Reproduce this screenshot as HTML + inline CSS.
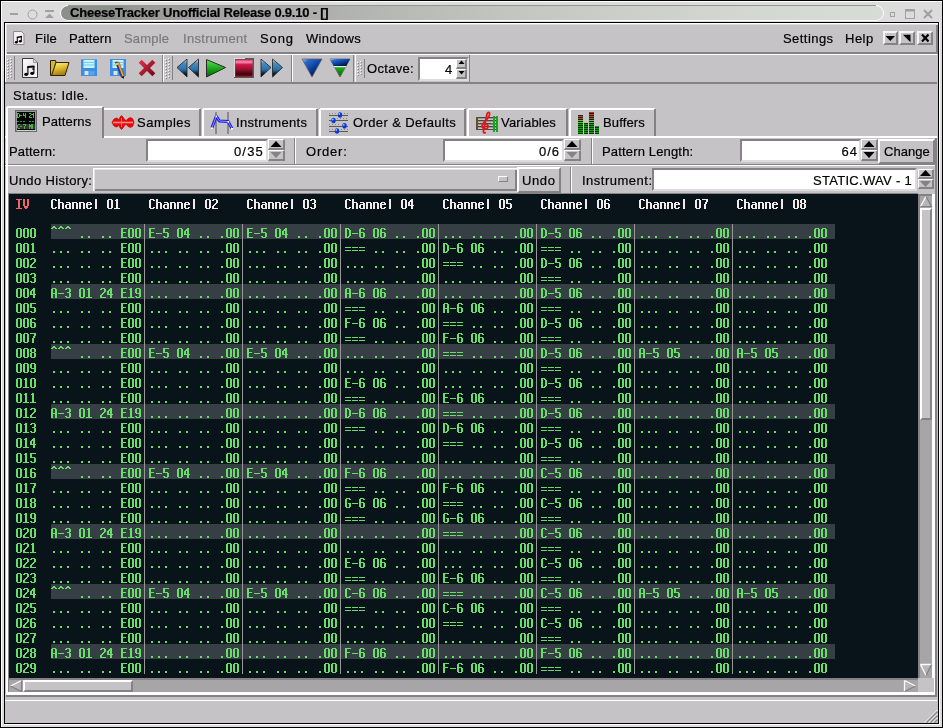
<!DOCTYPE html><html><head><meta charset="utf-8"><style>*{margin:0;padding:0}
html,body{width:943px;height:728px;overflow:hidden;background:#c6c3c6}
body{position:relative;font-family:"Liberation Sans",sans-serif;font-size:13px}
div{position:absolute}
.t{position:absolute;white-space:pre;line-height:15px;color:#000;font-size:13px;will-change:transform;-webkit-text-stroke:0.2px currentColor}
</style></head><body><div style="left:0px;top:0px;width:943px;height:728px;background:#000"></div>
<div style="left:1px;top:1px;width:941px;height:726px;background:#dcdcdc"></div>
<div style="left:1px;top:1px;width:941px;height:1px;background:#fff"></div>
<div style="left:1px;top:1px;width:1px;height:726px;background:#fff"></div>
<svg style="position:absolute;left:58px;top:4px" width="828" height="18"><defs><linearGradient id="tp" x1="0" x2="1" y1="0" y2="0"><stop offset="0" stop-color="#8a9089"/><stop offset="0.07" stop-color="#8c918b"/><stop offset="0.1" stop-color="#9a9b99"/><stop offset="0.25" stop-color="#a9a8a9"/><stop offset="0.4" stop-color="#b5b8b3"/><stop offset="0.55" stop-color="#c3c6c0"/><stop offset="0.7" stop-color="#cdd0ca"/><stop offset="0.85" stop-color="#d4d8d2"/><stop offset="1" stop-color="#d8dcd6"/></linearGradient></defs><path d="M10 1.5 H818 A7.5 7.5 0 0 1 818 16.5 H10 A7.5 7.5 0 0 1 10 1.5 Z" fill="url(#tp)" stroke="#fff" stroke-width="1"/><path d="M10 1.5 H818" stroke="#959595" stroke-width="1"/></svg>
<span class="t" style="left:70px;top:4px;font-weight:bold;font-size:13px;line-height:17px;letter-spacing:-0.22px">CheeseTracker Unofficial Release 0.9.10 - []</span>
<div style="left:10px;top:13px;width:8px;height:2px;background:#a0a0a0"></div>
<svg style="position:absolute;left:27px;top:9px" width="11" height="11"><circle cx="5.5" cy="5.5" r="4.5" fill="none" stroke="#a0a0a0" stroke-width="1"/></svg>
<svg style="position:absolute;left:44px;top:9px" width="11" height="11"><rect x="1" y="1" width="9" height="2" fill="#a0a0a0"/><path d="M1 9 L5.5 4.5 L10 9 Z" fill="#a0a0a0"/></svg>
<svg style="position:absolute;left:886px;top:9px" width="50" height="11"><rect x="4.5" y="3.5" width="4" height="4" fill="none" stroke="#a0a0a0"/><rect x="19.5" y="0.5" width="9" height="9" fill="none" stroke="#a0a0a0"/><rect x="19.5" y="0.5" width="9" height="2" fill="#a0a0a0"/><path d="M38 1 L46 9 M46 1 L38 9" stroke="#a0a0a0" stroke-width="2"/></svg>
<div style="left:4px;top:22px;width:935px;height:702px;background:#000"></div>
<div style="left:939px;top:22px;width:1px;height:703px;background:#fff"></div>
<div style="left:4px;top:724px;width:936px;height:1px;background:#fff"></div>
<div style="left:5px;top:23px;width:933px;height:700px;background:#c6c3c6"></div>
<div style="left:5px;top:23px;width:933px;height:31px;background:#c6c3c6;box-shadow:inset 1px 1px 0 #fff, inset 2px 2px 0 #dedbde, inset -1px -1px 0 #848284, inset -2px -2px 0 #848284"></div>
<svg style="position:absolute;left:13px;top:31px" width="13" height="15"><path d="M0.5 0.5 H8.5 L11 3 V13.5 H0.5 Z" fill="#f4f0f4" stroke="#8a8a8a"/><path d="M4.3 11 V6 M8.3 10 V5" stroke="#000" stroke-width="1"/><path d="M3.8 5.8 L8.8 4.8 V6.3 L3.8 7.3 Z" fill="#000"/><ellipse cx="3.3" cy="11.2" rx="1.5" ry="1.2" fill="#000"/><ellipse cx="7.3" cy="10.2" rx="1.5" ry="1.2" fill="#000"/></svg>
<span class="t" style="left:35px;top:31px;letter-spacing:0.300px;color:#000">File</span>
<span class="t" style="left:69px;top:31px;letter-spacing:0.100px;color:#000">Pattern</span>
<span class="t" style="left:124px;top:31px;letter-spacing:0.200px;color:#7b797b">Sample</span>
<span class="t" style="left:183px;top:31px;letter-spacing:0.300px;color:#7b797b">Instrument</span>
<span class="t" style="left:260px;top:31px;letter-spacing:0.900px;color:#000">Song</span>
<span class="t" style="left:306px;top:31px;letter-spacing:0.330px;color:#000">Windows</span>
<span class="t" style="left:783px;top:31px;letter-spacing:0.450px;color:#000">Settings</span>
<span class="t" style="left:845px;top:31px;letter-spacing:0.500px;color:#000">Help</span>
<div style="left:883px;top:31px;width:15px;height:14px;background:#c6c3c6;border-top:2px solid #f4f4f4;border-left:2px solid #f4f4f4;border-right:2px solid #848284;border-bottom:2px solid #848284;box-sizing:border-box"></div>
<svg style="position:absolute;left:883px;top:31px" width="15" height="14" viewBox="0 0 15 14"><path d="M2.5 5 H12 L7.25 10 Z" fill="#000"/></svg>
<div style="left:899px;top:31px;width:16px;height:14px;background:#c6c3c6;border-top:2px solid #f4f4f4;border-left:2px solid #f4f4f4;border-right:2px solid #848284;border-bottom:2px solid #848284;box-sizing:border-box"></div>
<svg style="position:absolute;left:899px;top:31px" width="16" height="14" viewBox="0 0 16 14"><path d="M4 3.8 H11.5 V11.3 Z" fill="#000"/></svg>
<div style="left:917px;top:31px;width:16px;height:14px;background:#c6c3c6;border-top:2px solid #f4f4f4;border-left:2px solid #f4f4f4;border-right:2px solid #848284;border-bottom:2px solid #848284;box-sizing:border-box"></div>
<svg style="position:absolute;left:917px;top:31px" width="16" height="14" viewBox="0 0 16 14"><path d="M5 3.5 L11.5 10.5 M11.5 3.5 L5 10.5" stroke="#000" stroke-width="2.2"/></svg>
<div style="left:5px;top:54px;width:932px;height:1px;background:#fff"></div>
<div style="left:5px;top:82px;width:932px;height:2px;background:#848284"></div>
<div style="left:291px;top:55px;width:1px;height:27px;background:#848284"></div>
<div style="left:292px;top:55px;width:1px;height:27px;background:#fff"></div>
<div style="left:5px;top:55px;width:1px;height:27px;background:#fff"></div>
<div style="left:162px;top:55px;width:1px;height:27px;background:#848284"></div>
<div style="left:163px;top:55px;width:1px;height:27px;background:#fff"></div>
<div style="left:353px;top:55px;width:1px;height:27px;background:#848284"></div>
<div style="left:355px;top:55px;width:1px;height:27px;background:#fff"></div>
<div style="left:469px;top:55px;width:1px;height:27px;background:#848284"></div>
<div style="left:7px;top:59px;width:1px;height:1px;background:#fff"></div>
<div style="left:8px;top:60px;width:1px;height:1px;background:#848284"></div>
<div style="left:7px;top:62px;width:1px;height:1px;background:#fff"></div>
<div style="left:8px;top:63px;width:1px;height:1px;background:#848284"></div>
<div style="left:7px;top:65px;width:1px;height:1px;background:#fff"></div>
<div style="left:8px;top:66px;width:1px;height:1px;background:#848284"></div>
<div style="left:7px;top:68px;width:1px;height:1px;background:#fff"></div>
<div style="left:8px;top:69px;width:1px;height:1px;background:#848284"></div>
<div style="left:7px;top:71px;width:1px;height:1px;background:#fff"></div>
<div style="left:8px;top:72px;width:1px;height:1px;background:#848284"></div>
<div style="left:7px;top:74px;width:1px;height:1px;background:#fff"></div>
<div style="left:8px;top:75px;width:1px;height:1px;background:#848284"></div>
<div style="left:7px;top:77px;width:1px;height:1px;background:#fff"></div>
<div style="left:8px;top:78px;width:1px;height:1px;background:#848284"></div>
<div style="left:10px;top:58px;width:1px;height:1px;background:#fff"></div>
<div style="left:11px;top:59px;width:1px;height:1px;background:#848284"></div>
<div style="left:10px;top:61px;width:1px;height:1px;background:#fff"></div>
<div style="left:11px;top:62px;width:1px;height:1px;background:#848284"></div>
<div style="left:10px;top:64px;width:1px;height:1px;background:#fff"></div>
<div style="left:11px;top:65px;width:1px;height:1px;background:#848284"></div>
<div style="left:10px;top:67px;width:1px;height:1px;background:#fff"></div>
<div style="left:11px;top:68px;width:1px;height:1px;background:#848284"></div>
<div style="left:10px;top:70px;width:1px;height:1px;background:#fff"></div>
<div style="left:11px;top:71px;width:1px;height:1px;background:#848284"></div>
<div style="left:10px;top:73px;width:1px;height:1px;background:#fff"></div>
<div style="left:11px;top:74px;width:1px;height:1px;background:#848284"></div>
<div style="left:10px;top:76px;width:1px;height:1px;background:#fff"></div>
<div style="left:11px;top:77px;width:1px;height:1px;background:#848284"></div>
<div style="left:14px;top:56px;width:1px;height:24px;background:#848284"></div>
<div style="left:165px;top:59px;width:1px;height:1px;background:#fff"></div>
<div style="left:166px;top:60px;width:1px;height:1px;background:#848284"></div>
<div style="left:165px;top:62px;width:1px;height:1px;background:#fff"></div>
<div style="left:166px;top:63px;width:1px;height:1px;background:#848284"></div>
<div style="left:165px;top:65px;width:1px;height:1px;background:#fff"></div>
<div style="left:166px;top:66px;width:1px;height:1px;background:#848284"></div>
<div style="left:165px;top:68px;width:1px;height:1px;background:#fff"></div>
<div style="left:166px;top:69px;width:1px;height:1px;background:#848284"></div>
<div style="left:165px;top:71px;width:1px;height:1px;background:#fff"></div>
<div style="left:166px;top:72px;width:1px;height:1px;background:#848284"></div>
<div style="left:165px;top:74px;width:1px;height:1px;background:#fff"></div>
<div style="left:166px;top:75px;width:1px;height:1px;background:#848284"></div>
<div style="left:165px;top:77px;width:1px;height:1px;background:#fff"></div>
<div style="left:166px;top:78px;width:1px;height:1px;background:#848284"></div>
<div style="left:168px;top:58px;width:1px;height:1px;background:#fff"></div>
<div style="left:169px;top:59px;width:1px;height:1px;background:#848284"></div>
<div style="left:168px;top:61px;width:1px;height:1px;background:#fff"></div>
<div style="left:169px;top:62px;width:1px;height:1px;background:#848284"></div>
<div style="left:168px;top:64px;width:1px;height:1px;background:#fff"></div>
<div style="left:169px;top:65px;width:1px;height:1px;background:#848284"></div>
<div style="left:168px;top:67px;width:1px;height:1px;background:#fff"></div>
<div style="left:169px;top:68px;width:1px;height:1px;background:#848284"></div>
<div style="left:168px;top:70px;width:1px;height:1px;background:#fff"></div>
<div style="left:169px;top:71px;width:1px;height:1px;background:#848284"></div>
<div style="left:168px;top:73px;width:1px;height:1px;background:#fff"></div>
<div style="left:169px;top:74px;width:1px;height:1px;background:#848284"></div>
<div style="left:168px;top:76px;width:1px;height:1px;background:#fff"></div>
<div style="left:169px;top:77px;width:1px;height:1px;background:#848284"></div>
<div style="left:172px;top:56px;width:1px;height:24px;background:#848284"></div>
<div style="left:357px;top:62px;width:1px;height:1px;background:#fff"></div>
<div style="left:358px;top:63px;width:1px;height:1px;background:#848284"></div>
<div style="left:357px;top:65px;width:1px;height:1px;background:#fff"></div>
<div style="left:358px;top:66px;width:1px;height:1px;background:#848284"></div>
<div style="left:357px;top:68px;width:1px;height:1px;background:#fff"></div>
<div style="left:358px;top:69px;width:1px;height:1px;background:#848284"></div>
<div style="left:357px;top:71px;width:1px;height:1px;background:#fff"></div>
<div style="left:358px;top:72px;width:1px;height:1px;background:#848284"></div>
<div style="left:357px;top:74px;width:1px;height:1px;background:#fff"></div>
<div style="left:358px;top:75px;width:1px;height:1px;background:#848284"></div>
<div style="left:360px;top:61px;width:1px;height:1px;background:#fff"></div>
<div style="left:361px;top:62px;width:1px;height:1px;background:#848284"></div>
<div style="left:360px;top:64px;width:1px;height:1px;background:#fff"></div>
<div style="left:361px;top:65px;width:1px;height:1px;background:#848284"></div>
<div style="left:360px;top:67px;width:1px;height:1px;background:#fff"></div>
<div style="left:361px;top:68px;width:1px;height:1px;background:#848284"></div>
<div style="left:360px;top:70px;width:1px;height:1px;background:#fff"></div>
<div style="left:361px;top:71px;width:1px;height:1px;background:#848284"></div>
<div style="left:360px;top:73px;width:1px;height:1px;background:#fff"></div>
<div style="left:361px;top:74px;width:1px;height:1px;background:#848284"></div>
<div style="left:364px;top:59px;width:1px;height:19px;background:#848284"></div>
<svg width="0" height="0" style="position:absolute"><defs>
<linearGradient id="gblue" x1="0" y1="0" x2="0.8" y2="1"><stop offset="0" stop-color="#b0d8ff"/><stop offset="0.2" stop-color="#2a6ad0"/><stop offset="0.6" stop-color="#0a3a98"/><stop offset="1" stop-color="#000820"/></linearGradient>
<linearGradient id="gblue2" x1="0" y1="0" x2="0" y2="1"><stop offset="0" stop-color="#f0f8ff"/><stop offset="0.22" stop-color="#4a90c8"/><stop offset="0.6" stop-color="#2a70a8"/><stop offset="0.85" stop-color="#001020"/><stop offset="1" stop-color="#000000"/></linearGradient>
<linearGradient id="ggreen" x1="0" y1="0" x2="0" y2="1"><stop offset="0" stop-color="#60e060"/><stop offset="0.6" stop-color="#10a010"/><stop offset="1" stop-color="#056005"/></linearGradient>
<linearGradient id="gred" x1="0" y1="0" x2="0" y2="1"><stop offset="0" stop-color="#ff90a8"/><stop offset="0.3" stop-color="#c01838"/><stop offset="1" stop-color="#500010"/></linearGradient>
<linearGradient id="gyel" x1="0" y1="0" x2="1" y2="1"><stop offset="0" stop-color="#fff090"/><stop offset="0.5" stop-color="#e0c030"/><stop offset="1" stop-color="#a07800"/></linearGradient>
<linearGradient id="gx" x1="0" y1="0" x2="1" y2="1"><stop offset="0" stop-color="#e03048"/><stop offset="1" stop-color="#700818"/></linearGradient>
</defs></svg>
<svg style="position:absolute;left:21px;top:57px" width="19" height="22" viewBox="0 0 19 22"><defs><linearGradient id="gpg" x1="0" y1="0" x2="1" y2="1"><stop offset="0" stop-color="#ffffff"/><stop offset="0.5" stop-color="#e8e8e8"/><stop offset="1" stop-color="#ffffff"/></linearGradient></defs><path d="M1.5 1.5 H12.5 L16.5 5.5 V20.5 H1.5 Z" fill="url(#gpg)" stroke="#3a3a3a" stroke-width="1"/><path d="M12.5 1.5 V5.5 H16.5" fill="#d8d8d8" stroke="#888" stroke-width="0.8"/><path d="M6.9 17 V9.5 M12.9 16 V9" stroke="#000" stroke-width="1.1"/><path d="M6.4 9 L13.4 8.5 V10.5 L6.4 11 Z" fill="#000"/><path d="M11 12 H13.4" stroke="#000" stroke-width="1"/><ellipse cx="5.2" cy="17.3" rx="2" ry="1.6" fill="#000"/><ellipse cx="11.2" cy="16.3" rx="2" ry="1.6" fill="#000"/></svg>
<svg style="position:absolute;left:49px;top:59px" width="22" height="18" viewBox="0 0 22 18"><defs><linearGradient id="gfd" x1="0" y1="0" x2="0.3" y2="1"><stop offset="0" stop-color="#fff4a0"/><stop offset="0.4" stop-color="#e8cc40"/><stop offset="1" stop-color="#a88010"/></linearGradient></defs><path d="M1.5 1.5 H6.5 L7 3 L3.5 16.5 H1.5 Z" fill="#d8b830" stroke="#302000" stroke-width="1"/><path d="M7 3.5 H20 L16 16.5 H2.5 Z" fill="url(#gfd)" stroke="#302000" stroke-width="1"/></svg>
<svg style="position:absolute;left:81px;top:59px" width="16" height="17" viewBox="0 0 16 17"><rect x="0" y="0" width="16" height="17" fill="#3a8ee6"/><rect x="0" y="0" width="16" height="1" fill="#5aa8f0"/><rect x="2.5" y="1" width="11" height="8" fill="#c4f6fc"/><path d="M2.5 3.5 H13.5 M2.5 6 H13.5" stroke="#7cc8e8" stroke-width="1"/><rect x="3.5" y="12" width="4" height="4" fill="#e4e0da"/><rect x="8.5" y="12" width="5" height="4" fill="#5aa4ea"/></svg>
<svg style="position:absolute;left:110px;top:59px" width="17" height="21" viewBox="0 0 17 21"><rect x="0" y="0" width="16" height="17" fill="#3a8ee6"/><rect x="2.5" y="1" width="11" height="8" fill="#c4f6fc"/><path d="M2.5 3.5 H13.5 M2.5 6 H13.5" stroke="#7cc8e8" stroke-width="1"/><rect x="3.5" y="12" width="4" height="4" fill="#e4e0da"/><path d="M5 3 L7.5 2.5 L13.5 17.5 L11 18.5 Z" fill="#1838a0"/><path d="M7 3.5 L9 3 L14.5 17.5 L12.5 18.5 Z" fill="#f0a040" stroke="#704000" stroke-width="0.5"/><path d="M11.5 18 L14 17 L13.5 20 Z" fill="#000"/><rect x="6" y="4" width="2" height="2" fill="#e8d040"/></svg>
<svg style="position:absolute;left:137px;top:58px" width="20" height="20" viewBox="0 0 20 20"><path d="M3.2 3.2 L16.8 16.8 M16.8 3.2 L3.2 16.8" stroke="url(#gx)" stroke-width="4.2" stroke-linecap="butt"/></svg>
<svg style="position:absolute;left:176px;top:58px" width="24" height="20" viewBox="0 0 24 20"><path d="M1 9.5 L11 1 V19 Z" fill="url(#gblue2)" stroke="#2a2a2a" stroke-width="0.9"/><path d="M12.5 9.5 L22.5 1 V19 Z" fill="url(#gblue2)" stroke="#2a2a2a" stroke-width="0.9"/></svg>
<svg style="position:absolute;left:205px;top:58px" width="22" height="20" viewBox="0 0 22 20"><path d="M1.5 1.5 L20.5 9.5 L1.5 19 Z" fill="url(#ggreen)" stroke="#2a2a2a" stroke-width="1"/></svg>
<svg style="position:absolute;left:233px;top:57px" width="22" height="22" viewBox="0 0 22 22"><defs><linearGradient id="gst" x1="0" y1="0" x2="0" y2="1"><stop offset="0" stop-color="#d02860"/><stop offset="0.15" stop-color="#ff90b0"/><stop offset="0.3" stop-color="#d01848"/><stop offset="0.6" stop-color="#901030"/><stop offset="0.85" stop-color="#400008"/><stop offset="1" stop-color="#900020"/></linearGradient></defs><rect x="1" y="1" width="20" height="20" fill="#5a5a5a"/><path d="M1 1 H12 V2 H2 V20 H1 Z" fill="#d8d8d8"/><rect x="2.5" y="2.5" width="17" height="17" fill="url(#gst)"/></svg>
<svg style="position:absolute;left:260px;top:58px" width="24" height="20" viewBox="0 0 24 20"><path d="M1 1 L11 9.5 L1 19 Z" fill="url(#gblue2)" stroke="#2a2a2a" stroke-width="0.9"/><path d="M12.5 1 L22.5 9.5 L12.5 19 Z" fill="url(#gblue2)" stroke="#2a2a2a" stroke-width="0.9"/></svg>
<svg style="position:absolute;left:301px;top:58px" width="22" height="20" viewBox="0 0 22 20"><path d="M1 1 H21 L11 19 Z" fill="url(#gblue)" stroke="#606060" stroke-width="0.8"/></svg>
<svg style="position:absolute;left:329px;top:58px" width="22" height="20" viewBox="0 0 22 20"><path d="M1 1 H21 L11 19 Z" fill="url(#ggreen)" stroke="#606060" stroke-width="0.8"/><path d="M1 1 H21 L17.1 8 H4.9 Z" fill="url(#gblue)"/><path d="M4.9 8.6 H17.1" stroke="#e8e8e8" stroke-width="1.2"/></svg>
<span class="t" style="left:367px;top:61px;letter-spacing:0.320px;">Octave:</span>
<div style="left:418px;top:57px;width:51px;height:24px;background:#fff;border-top:2px solid #848284;border-left:2px solid #848284;border-right:2px solid #dedbde;border-bottom:2px solid #dedbde;box-sizing:border-box"></div>
<span class="t" style="left:445px;top:62px;">4</span>
<div style="left:456px;top:59px;width:11px;height:10px;background:#c6c3c6;border-top:1px solid #fff;border-left:1px solid #fff;border-right:2px solid #848284;border-bottom:2px solid #848284;box-sizing:border-box"></div>
<svg style="position:absolute;left:456px;top:59px" width="11" height="10" viewBox="0 0 11 10"><path d="M3 5 L6 1.5 L9 5 Z" fill="#000" transform="translate(-0.5,0)"/></svg>
<div style="left:456px;top:69px;width:11px;height:10px;background:#c6c3c6;border-top:1px solid #fff;border-left:1px solid #fff;border-right:2px solid #848284;border-bottom:2px solid #848284;box-sizing:border-box"></div>
<svg style="position:absolute;left:456px;top:69px" width="11" height="10" viewBox="0 0 11 10"><path d="M3 2 L6 5.5 L9 2 Z" fill="#000" transform="translate(-0.5,0)"/></svg>
<span class="t" style="left:13px;top:88px;letter-spacing:0.540px;">Status: Idle.</span>
<div style="left:5px;top:136px;width:932px;height:2px;background:#fff"></div>
<div style="left:102px;top:108px;width:99px;height:28px;background:#c6c3c6"></div>
<div style="left:102px;top:109px;width:2px;height:27px;background:#fff"></div>
<div style="left:103px;top:108px;width:97px;height:2px;background:#fff"></div>
<div style="left:199px;top:109px;width:2px;height:27px;background:#848284"></div>
<div style="left:202px;top:108px;width:116px;height:28px;background:#c6c3c6"></div>
<div style="left:202px;top:109px;width:2px;height:27px;background:#fff"></div>
<div style="left:203px;top:108px;width:114px;height:2px;background:#fff"></div>
<div style="left:316px;top:109px;width:2px;height:27px;background:#848284"></div>
<div style="left:319px;top:108px;width:147px;height:28px;background:#c6c3c6"></div>
<div style="left:319px;top:109px;width:2px;height:27px;background:#fff"></div>
<div style="left:320px;top:108px;width:145px;height:2px;background:#fff"></div>
<div style="left:464px;top:109px;width:2px;height:27px;background:#848284"></div>
<div style="left:467px;top:108px;width:101px;height:28px;background:#c6c3c6"></div>
<div style="left:467px;top:109px;width:2px;height:27px;background:#fff"></div>
<div style="left:468px;top:108px;width:99px;height:2px;background:#fff"></div>
<div style="left:566px;top:109px;width:2px;height:27px;background:#848284"></div>
<div style="left:569px;top:108px;width:87px;height:28px;background:#c6c3c6"></div>
<div style="left:569px;top:109px;width:2px;height:27px;background:#fff"></div>
<div style="left:570px;top:108px;width:85px;height:2px;background:#fff"></div>
<div style="left:654px;top:109px;width:2px;height:27px;background:#848284"></div>
<div style="left:6px;top:106px;width:98px;height:32px;background:#c6c3c6"></div>
<div style="left:6px;top:107px;width:2px;height:31px;background:#fff"></div>
<div style="left:7px;top:106px;width:96px;height:2px;background:#fff"></div>
<div style="left:102px;top:107px;width:2px;height:31px;background:#848284"></div>
<span class="t" style="left:42px;top:114px;letter-spacing:0.110px;">Patterns</span>
<span class="t" style="left:137px;top:115px;letter-spacing:0.500px;">Samples</span>
<span class="t" style="left:236px;top:115px;letter-spacing:0.300px;">Instruments</span>
<span class="t" style="left:353px;top:115px;letter-spacing:0.390px;">Order &amp; Defaults</span>
<span class="t" style="left:501px;top:115px;letter-spacing:0.200px;">Variables</span>
<span class="t" style="left:603px;top:115px;letter-spacing:0.130px;">Buffers</span>
<svg style="position:absolute;left:15px;top:110px" width="22" height="22" viewBox="0 0 22 22"><rect x="0" y="0" width="22" height="22" fill="#6a6a6a"/><rect x="1" y="1" width="20" height="20" fill="#9a9a9a"/><rect x="2" y="2" width="18" height="18" fill="#000"/><rect x="2" y="14" width="18" height="5" fill="#383838"/><rect x="2" y="20" width="19" height="1" fill="#d0d0d0"/><g fill="#34c834"><rect x="2" y="3" width="1" height="1"/><rect x="3" y="3" width="1" height="1"/><rect x="2" y="4" width="1" height="1"/><rect x="4" y="4" width="1" height="1"/><rect x="2" y="5" width="1" height="1"/><rect x="4" y="5" width="1" height="1"/><rect x="2" y="6" width="1" height="1"/><rect x="4" y="6" width="1" height="1"/><rect x="2" y="7" width="1" height="1"/><rect x="3" y="7" width="1" height="1"/><rect x="5" y="5" width="1" height="1"/><rect x="6" y="5" width="1" height="1"/><rect x="8" y="3" width="1" height="1"/><rect x="10" y="3" width="1" height="1"/><rect x="8" y="4" width="1" height="1"/><rect x="10" y="4" width="1" height="1"/><rect x="8" y="5" width="1" height="1"/><rect x="9" y="5" width="1" height="1"/><rect x="10" y="5" width="1" height="1"/><rect x="10" y="6" width="1" height="1"/><rect x="10" y="7" width="1" height="1"/><rect x="14" y="3" width="1" height="1"/><rect x="15" y="3" width="1" height="1"/><rect x="16" y="4" width="1" height="1"/><rect x="15" y="5" width="1" height="1"/><rect x="14" y="6" width="1" height="1"/><rect x="14" y="7" width="1" height="1"/><rect x="15" y="7" width="1" height="1"/><rect x="16" y="7" width="1" height="1"/><rect x="18" y="3" width="1" height="1"/><rect x="17" y="4" width="1" height="1"/><rect x="18" y="4" width="1" height="1"/><rect x="18" y="5" width="1" height="1"/><rect x="18" y="6" width="1" height="1"/><rect x="18" y="7" width="1" height="1"/></g><g fill="#2aa02a"><rect x="2" y="11" width="1" height="1"/><rect x="3" y="11" width="1" height="1"/><rect x="5" y="11" width="1" height="1"/><rect x="6" y="11" width="1" height="1"/><rect x="8" y="11" width="1" height="1"/><rect x="9" y="11" width="1" height="1"/><rect x="14" y="11" width="1" height="1"/><rect x="15" y="11" width="1" height="1"/><rect x="17" y="11" width="1" height="1"/><rect x="18" y="11" width="1" height="1"/></g><g fill="#3cb83c"><rect x="3" y="14" width="1" height="1"/><rect x="4" y="14" width="1" height="1"/><rect x="2" y="15" width="1" height="1"/><rect x="2" y="16" width="1" height="1"/><rect x="2" y="17" width="1" height="1"/><rect x="3" y="18" width="1" height="1"/><rect x="4" y="18" width="1" height="1"/><rect x="5" y="16" width="1" height="1"/><rect x="6" y="16" width="1" height="1"/><rect x="8" y="14" width="1" height="1"/><rect x="9" y="14" width="1" height="1"/><rect x="10" y="14" width="1" height="1"/><rect x="10" y="15" width="1" height="1"/><rect x="9" y="16" width="1" height="1"/><rect x="9" y="17" width="1" height="1"/><rect x="9" y="18" width="1" height="1"/><rect x="14" y="14" width="1" height="1"/><rect x="16" y="14" width="1" height="1"/><rect x="14" y="15" width="1" height="1"/><rect x="15" y="15" width="1" height="1"/><rect x="16" y="15" width="1" height="1"/><rect x="14" y="16" width="1" height="1"/><rect x="15" y="16" width="1" height="1"/><rect x="16" y="16" width="1" height="1"/><rect x="14" y="17" width="1" height="1"/><rect x="16" y="17" width="1" height="1"/><rect x="14" y="18" width="1" height="1"/><rect x="16" y="18" width="1" height="1"/><rect x="17" y="14" width="1" height="1"/><rect x="17" y="15" width="1" height="1"/><rect x="17" y="16" width="1" height="1"/><rect x="17" y="17" width="1" height="1"/><rect x="17" y="18" width="1" height="1"/></g></svg>
<svg style="position:absolute;left:111px;top:114px" width="25" height="17" viewBox="0 0 25 17"><path d="M1 8.5 L2 6.5 L3 5 L5 4 L7 4.5 L8 6 L9 3 L10.5 1.5 L12 3 L13 4.5 L15 7 L16 5.5 L17 4.5 L19.5 3.5 L21.5 4.5 L22.5 6.5 L23 8.5 L22.5 10.5 L21.5 12.5 L19.5 13.5 L17 12.5 L16 11.5 L15 10 L13 12.5 L12 14 L10.5 15.5 L9 14 L8 11 L7 12.5 L5 13 L3 12 L2 10.5 Z" fill="#e80808" stroke="#c00000" stroke-width="0.6"/><path d="M2 8.5 H22" stroke="#ff8a8a" stroke-width="1.6"/><path d="M10.5 4 V13" stroke="#ff7070" stroke-width="1"/></svg>
<svg style="position:absolute;left:209px;top:111px" width="26" height="24" viewBox="0 0 26 24"><rect x="6" y="1" width="2" height="22" fill="#8a8a8a"/><rect x="18" y="1" width="2" height="22" fill="#8a8a8a"/><path d="M2.9 16.9 L7.3 5.3 L10.3 9.9 L19.2 10.6 L22.9 17.4" fill="none" stroke="#2020e0" stroke-width="3" stroke-linejoin="round"/><path d="M2.9 16.9 L7.3 5.3 L10.3 9.9 L19.2 10.6 L22.9 17.4" fill="none" stroke="#8a8aff" stroke-width="1"/><g fill="#fff"><rect x="6.5" y="4.5" width="1.6" height="1.6"/><rect x="18.5" y="10" width="1.6" height="1.6"/><rect x="2" y="16.5" width="2" height="1.4"/><rect x="22" y="17" width="2" height="1.4"/></g></svg>
<svg style="position:absolute;left:328px;top:111px" width="22" height="23" viewBox="0 0 22 23"><g fill="#5a5a5a"><rect x="1" y="4" width="19" height="1"/><rect x="1" y="9" width="19" height="1"/><rect x="1" y="15" width="19" height="1"/><rect x="1" y="20" width="19" height="1"/></g><g fill="#888"><rect x="1" y="2" width="1" height="1"/><rect x="4" y="2" width="1" height="1"/><rect x="7" y="2" width="1" height="1"/><rect x="16" y="2" width="1" height="1"/><rect x="19" y="2" width="1" height="1"/><rect x="9" y="7" width="1" height="1"/><rect x="12" y="7" width="1" height="1"/><rect x="15" y="7" width="1" height="1"/><rect x="18" y="7" width="1" height="1"/><rect x="1" y="13" width="1" height="1"/><rect x="4" y="13" width="1" height="1"/><rect x="7" y="13" width="1" height="1"/><rect x="10" y="13" width="1" height="1"/><rect x="1" y="18" width="1" height="1"/><rect x="4" y="18" width="1" height="1"/><rect x="13" y="18" width="1" height="1"/><rect x="16" y="18" width="1" height="1"/><rect x="19" y="18" width="1" height="1"/></g><g fill="#0838d8"><ellipse cx="12" cy="4" rx="2.2" ry="2.8"/><ellipse cx="5.5" cy="9.5" rx="2.2" ry="2.8"/><ellipse cx="16.5" cy="14.8" rx="2.2" ry="2.8"/><ellipse cx="9" cy="20" rx="2.2" ry="2.8"/></g><g fill="#90c0ff"><circle cx="11.3" cy="3" r="0.9"/><circle cx="4.8" cy="8.5" r="0.9"/><circle cx="15.8" cy="13.8" r="0.9"/><circle cx="8.3" cy="19" r="0.9"/></g></svg>
<svg style="position:absolute;left:474px;top:111px" width="25" height="24" viewBox="0 0 25 24"><g fill="#484848"><rect x="3" y="6" width="21" height="1"/><rect x="3" y="9" width="21" height="1"/><rect x="3" y="12" width="21" height="1"/><rect x="3" y="15" width="21" height="1"/><rect x="3" y="18" width="21" height="1"/></g><g fill="#9a9a9a"><rect x="3" y="7" width="21" height="1"/><rect x="3" y="10" width="21" height="1"/><rect x="3" y="13" width="21" height="1"/><rect x="3" y="16" width="21" height="1"/></g><rect x="2" y="6" width="2" height="13" fill="#6a4a20"/><path d="M12 21.5 Q9 22.5 9.5 20 L13 3 Q14 0.5 15.5 2 Q16.5 5 10 11.5 Q6.5 15 9.5 17.5 Q13.5 19 14 15.5 Q14 12.5 10.5 13.5" fill="none" stroke="#e01818" stroke-width="1.8"/><g fill="#20a020"><rect x="19" y="5" width="2" height="16"/><rect x="22" y="5" width="2" height="16"/><rect x="17" y="12" width="7" height="1.5"/></g></svg>
<svg style="position:absolute;left:577px;top:111px" width="23" height="23" viewBox="0 0 23 23"><rect x="1" y="4" width="5" height="1" fill="#302010"/><rect x="1" y="5" width="5" height="1" fill="#8a5a30"/><rect x="1" y="6" width="5" height="1" fill="#302010"/><rect x="1" y="7" width="5" height="1" fill="#8a5a30"/><rect x="1" y="8" width="5" height="1" fill="#202010"/><rect x="1" y="9" width="5" height="1" fill="#60c040"/><rect x="1" y="10" width="5" height="1" fill="#202010"/><rect x="1" y="11" width="5" height="1" fill="#60c040"/><rect x="1" y="12" width="5" height="1" fill="#043804"/><rect x="1" y="13" width="5" height="1" fill="#10a010"/><rect x="1" y="14" width="5" height="1" fill="#043804"/><rect x="1" y="15" width="5" height="1" fill="#10a010"/><rect x="1" y="16" width="5" height="1" fill="#043804"/><rect x="1" y="17" width="5" height="1" fill="#10a010"/><rect x="1" y="18" width="5" height="1" fill="#043804"/><rect x="1" y="19" width="5" height="1" fill="#10a010"/><rect x="1" y="20" width="5" height="1" fill="#043804"/><rect x="1" y="21" width="5" height="1" fill="#10a010"/><rect x="1" y="22" width="5" height="1" fill="#043804"/><rect x="7" y="12" width="4" height="1" fill="#043804"/><rect x="7" y="13" width="4" height="1" fill="#10a010"/><rect x="7" y="14" width="4" height="1" fill="#043804"/><rect x="7" y="15" width="4" height="1" fill="#10a010"/><rect x="7" y="16" width="4" height="1" fill="#043804"/><rect x="7" y="17" width="4" height="1" fill="#10a010"/><rect x="7" y="18" width="4" height="1" fill="#043804"/><rect x="7" y="19" width="4" height="1" fill="#10a010"/><rect x="7" y="20" width="4" height="1" fill="#043804"/><rect x="7" y="21" width="4" height="1" fill="#10a010"/><rect x="7" y="22" width="4" height="1" fill="#043804"/><rect x="12" y="1" width="5" height="1" fill="#f01010"/><rect x="12" y="2" width="5" height="1" fill="#301010"/><rect x="12" y="3" width="5" height="1" fill="#8a5a30"/><rect x="12" y="4" width="5" height="1" fill="#302010"/><rect x="12" y="5" width="5" height="1" fill="#8a5a30"/><rect x="12" y="6" width="5" height="1" fill="#302010"/><rect x="12" y="7" width="5" height="1" fill="#8a5a30"/><rect x="12" y="8" width="5" height="1" fill="#202010"/><rect x="12" y="9" width="5" height="1" fill="#60c040"/><rect x="12" y="10" width="5" height="1" fill="#202010"/><rect x="12" y="11" width="5" height="1" fill="#60c040"/><rect x="12" y="12" width="5" height="1" fill="#043804"/><rect x="12" y="13" width="5" height="1" fill="#10a010"/><rect x="12" y="14" width="5" height="1" fill="#043804"/><rect x="12" y="15" width="5" height="1" fill="#10a010"/><rect x="12" y="16" width="5" height="1" fill="#043804"/><rect x="12" y="17" width="5" height="1" fill="#10a010"/><rect x="12" y="18" width="5" height="1" fill="#043804"/><rect x="12" y="19" width="5" height="1" fill="#10a010"/><rect x="12" y="20" width="5" height="1" fill="#043804"/><rect x="12" y="21" width="5" height="1" fill="#10a010"/><rect x="12" y="22" width="5" height="1" fill="#043804"/><rect x="18" y="15" width="4" height="1" fill="#10a010"/><rect x="18" y="16" width="4" height="1" fill="#043804"/><rect x="18" y="17" width="4" height="1" fill="#10a010"/><rect x="18" y="18" width="4" height="1" fill="#043804"/><rect x="18" y="19" width="4" height="1" fill="#10a010"/><rect x="18" y="20" width="4" height="1" fill="#043804"/><rect x="18" y="21" width="4" height="1" fill="#10a010"/><rect x="18" y="22" width="4" height="1" fill="#043804"/></svg>
<span class="t" style="left:9px;top:144px;letter-spacing:0.170px;">Pattern:</span>
<div style="left:146px;top:139px;width:122px;height:23px;background:#fff;border-top:2px solid #848284;border-left:2px solid #848284;border-right:2px solid #dedbde;border-bottom:2px solid #dedbde;box-sizing:border-box"></div>
<span class="t" style="left:146px;width:118px;top:144px;text-align:right;letter-spacing:1.200px;">0/35</span>
<div style="left:268px;top:139px;width:17px;height:11px;background:#c6c3c6;border-top:1px solid #fff;border-left:1px solid #fff;border-right:2px solid #848284;border-bottom:2px solid #848284;box-sizing:border-box"></div>
<div style="left:268px;top:150px;width:17px;height:11px;background:#c6c3c6;border-top:1px solid #fff;border-left:1px solid #fff;border-right:2px solid #848284;border-bottom:2px solid #848284;box-sizing:border-box"></div>
<svg style="position:absolute;left:268px;top:139px" width="17" height="22" viewBox="0 0 17 22"><path d="M2.5 8 L8.0 2 L13.5 8 Z" fill="#000"/><path d="M2.5 13 L8.0 19 L13.5 13 Z" fill="#848284"/></svg>
<div style="left:294px;top:138px;width:1px;height:26px;background:#848284"></div>
<div style="left:295px;top:138px;width:1px;height:26px;background:#fff"></div>
<span class="t" style="left:306px;top:144px;letter-spacing:0.800px;">Order:</span>
<div style="left:443px;top:139px;width:121px;height:23px;background:#fff;border-top:2px solid #848284;border-left:2px solid #848284;border-right:2px solid #dedbde;border-bottom:2px solid #dedbde;box-sizing:border-box"></div>
<span class="t" style="left:443px;width:117px;top:144px;text-align:right;letter-spacing:1.000px;">0/6</span>
<div style="left:564px;top:139px;width:17px;height:11px;background:#c6c3c6;border-top:1px solid #fff;border-left:1px solid #fff;border-right:2px solid #848284;border-bottom:2px solid #848284;box-sizing:border-box"></div>
<div style="left:564px;top:150px;width:17px;height:11px;background:#c6c3c6;border-top:1px solid #fff;border-left:1px solid #fff;border-right:2px solid #848284;border-bottom:2px solid #848284;box-sizing:border-box"></div>
<svg style="position:absolute;left:564px;top:139px" width="17" height="22" viewBox="0 0 17 22"><path d="M2.5 8 L8.0 2 L13.5 8 Z" fill="#000"/><path d="M2.5 13 L8.0 19 L13.5 13 Z" fill="#848284"/></svg>
<div style="left:591px;top:138px;width:1px;height:26px;background:#848284"></div>
<div style="left:592px;top:138px;width:1px;height:26px;background:#fff"></div>
<span class="t" style="left:602px;top:144px;letter-spacing:0.160px;">Pattern Length:</span>
<div style="left:740px;top:139px;width:121px;height:23px;background:#fff;border-top:2px solid #848284;border-left:2px solid #848284;border-right:2px solid #dedbde;border-bottom:2px solid #dedbde;box-sizing:border-box"></div>
<span class="t" style="left:740px;width:118px;top:144px;text-align:right;letter-spacing:1.000px;">64</span>
<div style="left:861px;top:139px;width:17px;height:11px;background:#c6c3c6;border-top:1px solid #fff;border-left:1px solid #fff;border-right:2px solid #848284;border-bottom:2px solid #848284;box-sizing:border-box"></div>
<div style="left:861px;top:150px;width:17px;height:11px;background:#c6c3c6;border-top:1px solid #fff;border-left:1px solid #fff;border-right:2px solid #848284;border-bottom:2px solid #848284;box-sizing:border-box"></div>
<svg style="position:absolute;left:861px;top:139px" width="17" height="22" viewBox="0 0 17 22"><path d="M2.5 8 L8.0 2 L13.5 8 Z" fill="#000"/><path d="M2.5 13 L8.0 19 L13.5 13 Z" fill="#000"/></svg>
<div style="left:878px;top:139px;width:57px;height:25px;background:#c6c3c6;border-top:2px solid #fff;border-left:2px solid #fff;border-right:2px solid #848284;border-bottom:2px solid #848284;box-sizing:border-box"></div>
<span class="t" style="left:884px;top:144px;letter-spacing:0.050px;">Change</span>
<div style="left:5px;top:164px;width:932px;height:1px;background:#848284"></div>
<div style="left:5px;top:165px;width:932px;height:1px;background:#fff"></div>
<span class="t" style="left:9px;top:173px;letter-spacing:0.350px;">Undo History:</span>
<div style="left:93px;top:168px;width:424px;height:23px;background:#c6c3c6;box-shadow:inset 1px 1px 0 #fff, inset 2px 2px 0 #e6e3e6, inset -1px -1px 0 #848284, inset -2px -2px 0 #848284"></div>
<div style="left:498px;top:176px;width:10px;height:6px;background:#c6c3c6;border-top:1px solid #fff;border-left:1px solid #fff;border-right:1px solid #848284;border-bottom:1px solid #848284;box-sizing:border-box"></div>
<div style="left:517px;top:167px;width:44px;height:26px;background:#c6c3c6;border-top:2px solid #fff;border-left:2px solid #fff;border-right:2px solid #848284;border-bottom:2px solid #848284;box-sizing:border-box"></div>
<span class="t" style="left:522px;top:173px;letter-spacing:0.600px;">Undo</span>
<div style="left:570px;top:167px;width:1px;height:26px;background:#848284"></div>
<div style="left:571px;top:167px;width:1px;height:26px;background:#fff"></div>
<span class="t" style="left:582px;top:173px;letter-spacing:0.500px;">Instrument:</span>
<div style="left:652px;top:168px;width:265px;height:23px;background:#fff;border-top:2px solid #848284;border-left:2px solid #848284;border-right:2px solid #dedbde;border-bottom:2px solid #dedbde;box-sizing:border-box"></div>
<span class="t" style="left:652px;width:260px;top:173px;text-align:right;letter-spacing:0.300px;">STATIC.WAV - 1</span>
<div style="left:918px;top:169px;width:16px;height:10px;background:#c6c3c6;border-top:1px solid #fff;border-left:1px solid #fff;border-right:2px solid #848284;border-bottom:2px solid #848284;box-sizing:border-box"></div>
<div style="left:918px;top:179px;width:16px;height:10px;background:#c6c3c6;border-top:1px solid #fff;border-left:1px solid #fff;border-right:2px solid #848284;border-bottom:2px solid #848284;box-sizing:border-box"></div>
<svg style="position:absolute;left:918px;top:169px" width="16" height="20" viewBox="0 0 16 20"><path d="M2.0 7 L7.5 1 L13.0 7 Z" fill="#000"/><path d="M2.0 12 L7.5 18 L13.0 12 Z" fill="#848284"/></svg>
<div style="left:6px;top:138px;width:2px;height:557px;background:#fff"></div>
<div style="left:8px;top:193px;width:910px;height:1px;background:#848284"></div>
<div style="left:8px;top:193px;width:1px;height:500px;background:#848284"></div>
<div style="left:9px;top:194px;width:909px;height:484px;background:#09141a"></div>
<svg style="position:absolute;left:0;top:0" width="943" height="728" viewBox="0 0 943 728" shape-rendering="crispEdges"><defs><path id="g1" d="M0 5h6v1h-6z"/><path id="g2" d="M2 8h2v1h-2zM2 9h2v1h-2z"/><path id="g3" d="M1 0h4v1h-4zM0 1h2v1h-2zM4 1h2v1h-2zM0 2h2v1h-2zM4 2h2v1h-2zM0 3h2v1h-2zM4 3h2v1h-2zM0 4h2v1h-2zM4 4h2v1h-2zM0 5h2v1h-2zM4 5h2v1h-2zM0 6h2v1h-2zM4 6h2v1h-2zM0 7h2v1h-2zM4 7h2v1h-2zM0 8h2v1h-2zM4 8h2v1h-2zM1 9h4v1h-4z"/><path id="g4" d="M2 0h2v1h-2zM1 1h3v1h-3zM2 2h2v1h-2zM2 3h2v1h-2zM2 4h2v1h-2zM2 5h2v1h-2zM2 6h2v1h-2zM2 7h2v1h-2zM2 8h2v1h-2zM0 9h6v1h-6z"/><path id="g5" d="M1 0h4v1h-4zM0 1h2v1h-2zM4 1h2v1h-2zM4 2h2v1h-2zM4 3h2v1h-2zM3 4h2v1h-2zM2 5h2v1h-2zM1 6h2v1h-2zM0 7h2v1h-2zM0 8h2v1h-2zM0 9h6v1h-6z"/><path id="g6" d="M1 0h4v1h-4zM0 1h2v1h-2zM4 1h2v1h-2zM4 2h2v1h-2zM4 3h2v1h-2zM2 4h3v1h-3zM4 5h2v1h-2zM4 6h2v1h-2zM4 7h2v1h-2zM0 8h2v1h-2zM4 8h2v1h-2zM1 9h4v1h-4z"/><path id="g7" d="M3 0h2v1h-2zM2 1h3v1h-3zM1 2h4v1h-4zM0 3h2v1h-2zM3 3h2v1h-2zM0 4h2v1h-2zM3 4h2v1h-2zM0 5h2v1h-2zM3 5h2v1h-2zM0 6h6v1h-6zM3 7h2v1h-2zM3 8h2v1h-2zM3 9h2v1h-2z"/><path id="g8" d="M0 0h6v1h-6zM0 1h2v1h-2zM0 2h2v1h-2zM0 3h2v1h-2zM0 4h5v1h-5zM4 5h2v1h-2zM4 6h2v1h-2zM4 7h2v1h-2zM0 8h2v1h-2zM4 8h2v1h-2zM1 9h4v1h-4z"/><path id="g9" d="M1 0h4v1h-4zM0 1h2v1h-2zM4 1h2v1h-2zM0 2h2v1h-2zM0 3h2v1h-2zM0 4h5v1h-5zM0 5h2v1h-2zM4 5h2v1h-2zM0 6h2v1h-2zM4 6h2v1h-2zM0 7h2v1h-2zM4 7h2v1h-2zM0 8h2v1h-2zM4 8h2v1h-2zM1 9h4v1h-4z"/><path id="g10" d="M0 0h6v1h-6zM4 1h2v1h-2zM4 2h2v1h-2zM3 3h2v1h-2zM3 4h2v1h-2zM2 5h2v1h-2zM2 6h2v1h-2zM2 7h2v1h-2zM2 8h2v1h-2zM2 9h2v1h-2z"/><path id="g11" d="M1 0h4v1h-4zM0 1h2v1h-2zM4 1h2v1h-2zM0 2h2v1h-2zM4 2h2v1h-2zM0 3h2v1h-2zM4 3h2v1h-2zM1 4h4v1h-4zM0 5h2v1h-2zM4 5h2v1h-2zM0 6h2v1h-2zM4 6h2v1h-2zM0 7h2v1h-2zM4 7h2v1h-2zM0 8h2v1h-2zM4 8h2v1h-2zM1 9h4v1h-4z"/><path id="g12" d="M1 0h4v1h-4zM0 1h2v1h-2zM4 1h2v1h-2zM0 2h2v1h-2zM4 2h2v1h-2zM0 3h2v1h-2zM4 3h2v1h-2zM0 4h2v1h-2zM4 4h2v1h-2zM1 5h5v1h-5zM4 6h2v1h-2zM4 7h2v1h-2zM0 8h2v1h-2zM4 8h2v1h-2zM1 9h4v1h-4z"/><path id="g13" d="M0 4h6v1h-6zM0 7h6v1h-6z"/><path id="g14" d="M1 0h4v1h-4zM0 1h2v1h-2zM4 1h2v1h-2zM0 2h2v1h-2zM4 2h2v1h-2zM0 3h2v1h-2zM4 3h2v1h-2zM0 4h2v1h-2zM4 4h2v1h-2zM0 5h6v1h-6zM0 6h2v1h-2zM4 6h2v1h-2zM0 7h2v1h-2zM4 7h2v1h-2zM0 8h2v1h-2zM4 8h2v1h-2zM0 9h2v1h-2zM4 9h2v1h-2z"/><path id="g15" d="M1 0h4v1h-4zM0 1h2v1h-2zM4 1h2v1h-2zM0 2h2v1h-2zM0 3h2v1h-2zM0 4h2v1h-2zM0 5h2v1h-2zM0 6h2v1h-2zM0 7h2v1h-2zM0 8h2v1h-2zM4 8h2v1h-2zM1 9h4v1h-4z"/><path id="g16" d="M0 0h4v1h-4zM0 1h2v1h-2zM3 1h2v1h-2zM0 2h2v1h-2zM4 2h2v1h-2zM0 3h2v1h-2zM4 3h2v1h-2zM0 4h2v1h-2zM4 4h2v1h-2zM0 5h2v1h-2zM4 5h2v1h-2zM0 6h2v1h-2zM4 6h2v1h-2zM0 7h2v1h-2zM4 7h2v1h-2zM0 8h2v1h-2zM3 8h2v1h-2zM0 9h4v1h-4z"/><path id="g17" d="M0 0h6v1h-6zM0 1h2v1h-2zM0 2h2v1h-2zM0 3h2v1h-2zM0 4h5v1h-5zM0 5h2v1h-2zM0 6h2v1h-2zM0 7h2v1h-2zM0 8h2v1h-2zM0 9h6v1h-6z"/><path id="g18" d="M0 0h6v1h-6zM0 1h2v1h-2zM0 2h2v1h-2zM0 3h2v1h-2zM0 4h5v1h-5zM0 5h2v1h-2zM0 6h2v1h-2zM0 7h2v1h-2zM0 8h2v1h-2zM0 9h2v1h-2z"/><path id="g19" d="M1 0h4v1h-4zM0 1h2v1h-2zM4 1h2v1h-2zM0 2h2v1h-2zM0 3h2v1h-2zM0 4h2v1h-2zM0 5h2v1h-2zM3 5h3v1h-3zM0 6h2v1h-2zM4 6h2v1h-2zM0 7h2v1h-2zM4 7h2v1h-2zM0 8h2v1h-2zM4 8h2v1h-2zM1 9h4v1h-4z"/><path id="g20" d="M0 0h6v1h-6zM2 1h2v1h-2zM2 2h2v1h-2zM2 3h2v1h-2zM2 4h2v1h-2zM2 5h2v1h-2zM2 6h2v1h-2zM2 7h2v1h-2zM2 8h2v1h-2zM0 9h6v1h-6z"/><path id="g21" d="M0 0h2v1h-2zM4 0h2v1h-2zM0 1h2v1h-2zM4 1h2v1h-2zM0 2h2v1h-2zM4 2h2v1h-2zM0 3h2v1h-2zM4 3h2v1h-2zM0 4h2v1h-2zM4 4h2v1h-2zM0 5h2v1h-2zM4 5h2v1h-2zM0 6h2v1h-2zM4 6h2v1h-2zM1 7h4v1h-4zM1 8h4v1h-4zM2 9h2v1h-2z"/><path id="g22" d="M2 -2h2v1h-2zM1 -1h4v1h-4zM0 0h2v1h-2zM4 0h2v1h-2z"/><path id="g23" d="M1 3h4v1h-4zM4 4h2v1h-2zM1 5h5v1h-5zM0 6h2v1h-2zM4 6h2v1h-2zM0 7h2v1h-2zM4 7h2v1h-2zM0 8h2v1h-2zM4 8h2v1h-2zM1 9h5v1h-5z"/><path id="g24" d="M1 3h4v1h-4zM0 4h2v1h-2zM4 4h2v1h-2zM0 5h6v1h-6zM0 6h2v1h-2zM0 7h2v1h-2zM0 8h2v1h-2zM4 8h2v1h-2zM1 9h4v1h-4z"/><path id="g25" d="M0 0h2v1h-2zM0 1h2v1h-2zM0 2h2v1h-2zM0 3h5v1h-5zM0 4h2v1h-2zM4 4h2v1h-2zM0 5h2v1h-2zM4 5h2v1h-2zM0 6h2v1h-2zM4 6h2v1h-2zM0 7h2v1h-2zM4 7h2v1h-2zM0 8h2v1h-2zM4 8h2v1h-2zM0 9h2v1h-2zM4 9h2v1h-2z"/><path id="g26" d="M2 0h2v1h-2zM2 1h2v1h-2zM2 2h2v1h-2zM2 3h2v1h-2zM2 4h2v1h-2zM2 5h2v1h-2zM2 6h2v1h-2zM2 7h2v1h-2zM2 8h2v1h-2zM2 9h2v1h-2z"/><path id="g27" d="M0 3h5v1h-5zM0 4h2v1h-2zM4 4h2v1h-2zM0 5h2v1h-2zM4 5h2v1h-2zM0 6h2v1h-2zM4 6h2v1h-2zM0 7h2v1h-2zM4 7h2v1h-2zM0 8h2v1h-2zM4 8h2v1h-2zM0 9h2v1h-2zM4 9h2v1h-2z"/><g id="c0"><use href="#g22" x="0" y="0"/><use href="#g22" x="7" y="0"/><use href="#g22" x="14" y="0"/><use href="#g2" x="28" y="0"/><use href="#g2" x="35" y="0"/><use href="#g2" x="49" y="0"/><use href="#g2" x="56" y="0"/><use href="#g17" x="70" y="0"/><use href="#g3" x="77" y="0"/><use href="#g3" x="84" y="0"/></g><g id="c1"><use href="#g2" x="0" y="0"/><use href="#g2" x="7" y="0"/><use href="#g2" x="14" y="0"/><use href="#g2" x="28" y="0"/><use href="#g2" x="35" y="0"/><use href="#g2" x="49" y="0"/><use href="#g2" x="56" y="0"/><use href="#g17" x="70" y="0"/><use href="#g3" x="77" y="0"/><use href="#g3" x="84" y="0"/></g><g id="c2"><use href="#g14" x="0" y="0"/><use href="#g1" x="7" y="0"/><use href="#g6" x="14" y="0"/><use href="#g3" x="28" y="0"/><use href="#g4" x="35" y="0"/><use href="#g5" x="49" y="0"/><use href="#g7" x="56" y="0"/><use href="#g17" x="70" y="0"/><use href="#g4" x="77" y="0"/><use href="#g12" x="84" y="0"/></g><g id="c3"><use href="#g17" x="0" y="0"/><use href="#g1" x="7" y="0"/><use href="#g8" x="14" y="0"/><use href="#g3" x="28" y="0"/><use href="#g7" x="35" y="0"/><use href="#g2" x="49" y="0"/><use href="#g2" x="56" y="0"/><use href="#g2" x="70" y="0"/><use href="#g3" x="77" y="0"/><use href="#g3" x="84" y="0"/></g><g id="c4"><use href="#g2" x="0" y="0"/><use href="#g2" x="7" y="0"/><use href="#g2" x="14" y="0"/><use href="#g2" x="28" y="0"/><use href="#g2" x="35" y="0"/><use href="#g2" x="49" y="0"/><use href="#g2" x="56" y="0"/><use href="#g2" x="70" y="0"/><use href="#g3" x="77" y="0"/><use href="#g3" x="84" y="0"/></g><g id="c5"><use href="#g16" x="0" y="0"/><use href="#g1" x="7" y="0"/><use href="#g9" x="14" y="0"/><use href="#g3" x="28" y="0"/><use href="#g9" x="35" y="0"/><use href="#g2" x="49" y="0"/><use href="#g2" x="56" y="0"/><use href="#g2" x="70" y="0"/><use href="#g3" x="77" y="0"/><use href="#g3" x="84" y="0"/></g><g id="c6"><use href="#g13" x="0" y="0"/><use href="#g13" x="7" y="0"/><use href="#g13" x="14" y="0"/><use href="#g2" x="28" y="0"/><use href="#g2" x="35" y="0"/><use href="#g2" x="49" y="0"/><use href="#g2" x="56" y="0"/><use href="#g2" x="70" y="0"/><use href="#g3" x="77" y="0"/><use href="#g3" x="84" y="0"/></g><g id="c7"><use href="#g14" x="0" y="0"/><use href="#g1" x="7" y="0"/><use href="#g9" x="14" y="0"/><use href="#g3" x="28" y="0"/><use href="#g9" x="35" y="0"/><use href="#g2" x="49" y="0"/><use href="#g2" x="56" y="0"/><use href="#g2" x="70" y="0"/><use href="#g3" x="77" y="0"/><use href="#g3" x="84" y="0"/></g><g id="c8"><use href="#g18" x="0" y="0"/><use href="#g1" x="7" y="0"/><use href="#g9" x="14" y="0"/><use href="#g3" x="28" y="0"/><use href="#g9" x="35" y="0"/><use href="#g2" x="49" y="0"/><use href="#g2" x="56" y="0"/><use href="#g2" x="70" y="0"/><use href="#g3" x="77" y="0"/><use href="#g3" x="84" y="0"/></g><g id="c9"><use href="#g17" x="0" y="0"/><use href="#g1" x="7" y="0"/><use href="#g9" x="14" y="0"/><use href="#g3" x="28" y="0"/><use href="#g9" x="35" y="0"/><use href="#g2" x="49" y="0"/><use href="#g2" x="56" y="0"/><use href="#g2" x="70" y="0"/><use href="#g3" x="77" y="0"/><use href="#g3" x="84" y="0"/></g><g id="c10"><use href="#g19" x="0" y="0"/><use href="#g1" x="7" y="0"/><use href="#g9" x="14" y="0"/><use href="#g3" x="28" y="0"/><use href="#g9" x="35" y="0"/><use href="#g2" x="49" y="0"/><use href="#g2" x="56" y="0"/><use href="#g2" x="70" y="0"/><use href="#g3" x="77" y="0"/><use href="#g3" x="84" y="0"/></g><g id="c11"><use href="#g15" x="0" y="0"/><use href="#g1" x="7" y="0"/><use href="#g9" x="14" y="0"/><use href="#g3" x="28" y="0"/><use href="#g9" x="35" y="0"/><use href="#g2" x="49" y="0"/><use href="#g2" x="56" y="0"/><use href="#g2" x="70" y="0"/><use href="#g3" x="77" y="0"/><use href="#g3" x="84" y="0"/></g><g id="c12"><use href="#g16" x="0" y="0"/><use href="#g1" x="7" y="0"/><use href="#g8" x="14" y="0"/><use href="#g3" x="28" y="0"/><use href="#g9" x="35" y="0"/><use href="#g2" x="49" y="0"/><use href="#g2" x="56" y="0"/><use href="#g2" x="70" y="0"/><use href="#g3" x="77" y="0"/><use href="#g3" x="84" y="0"/></g><g id="c13"><use href="#g15" x="0" y="0"/><use href="#g1" x="7" y="0"/><use href="#g8" x="14" y="0"/><use href="#g3" x="28" y="0"/><use href="#g9" x="35" y="0"/><use href="#g2" x="49" y="0"/><use href="#g2" x="56" y="0"/><use href="#g2" x="70" y="0"/><use href="#g3" x="77" y="0"/><use href="#g3" x="84" y="0"/></g><g id="c14"><use href="#g18" x="0" y="0"/><use href="#g1" x="7" y="0"/><use href="#g8" x="14" y="0"/><use href="#g3" x="28" y="0"/><use href="#g9" x="35" y="0"/><use href="#g2" x="49" y="0"/><use href="#g2" x="56" y="0"/><use href="#g2" x="70" y="0"/><use href="#g3" x="77" y="0"/><use href="#g3" x="84" y="0"/></g><g id="c15"><use href="#g14" x="0" y="0"/><use href="#g1" x="7" y="0"/><use href="#g8" x="14" y="0"/><use href="#g3" x="28" y="0"/><use href="#g8" x="35" y="0"/><use href="#g2" x="49" y="0"/><use href="#g2" x="56" y="0"/><use href="#g2" x="70" y="0"/><use href="#g3" x="77" y="0"/><use href="#g3" x="84" y="0"/></g></defs><rect x="51" y="224" width="784" height="15" fill="#353f44"/><rect x="51" y="284" width="784" height="15" fill="#353f44"/><rect x="51" y="344" width="784" height="15" fill="#353f44"/><rect x="51" y="404" width="784" height="15" fill="#353f44"/><rect x="51" y="464" width="784" height="15" fill="#353f44"/><rect x="51" y="524" width="784" height="15" fill="#353f44"/><rect x="51" y="584" width="784" height="15" fill="#353f44"/><rect x="51" y="644" width="784" height="15" fill="#353f44"/><rect x="144" y="224" width="1" height="450" fill="#989898"/><rect x="242" y="224" width="1" height="450" fill="#989898"/><rect x="340" y="224" width="1" height="450" fill="#989898"/><rect x="438" y="224" width="1" height="450" fill="#989898"/><rect x="536" y="224" width="1" height="450" fill="#989898"/><rect x="634" y="224" width="1" height="450" fill="#989898"/><rect x="732" y="224" width="1" height="450" fill="#989898"/><g fill="#f26464"><use href="#g20" x="16" y="199"/><use href="#g21" x="23" y="199"/></g><g fill="#efebeb"><use href="#g15" x="51" y="199"/><use href="#g25" x="58" y="199"/><use href="#g23" x="65" y="199"/><use href="#g27" x="72" y="199"/><use href="#g27" x="79" y="199"/><use href="#g24" x="86" y="199"/><use href="#g26" x="93" y="199"/><use href="#g3" x="107" y="199"/><use href="#g4" x="114" y="199"/><use href="#g15" x="149" y="199"/><use href="#g25" x="156" y="199"/><use href="#g23" x="163" y="199"/><use href="#g27" x="170" y="199"/><use href="#g27" x="177" y="199"/><use href="#g24" x="184" y="199"/><use href="#g26" x="191" y="199"/><use href="#g3" x="205" y="199"/><use href="#g5" x="212" y="199"/><use href="#g15" x="247" y="199"/><use href="#g25" x="254" y="199"/><use href="#g23" x="261" y="199"/><use href="#g27" x="268" y="199"/><use href="#g27" x="275" y="199"/><use href="#g24" x="282" y="199"/><use href="#g26" x="289" y="199"/><use href="#g3" x="303" y="199"/><use href="#g6" x="310" y="199"/><use href="#g15" x="345" y="199"/><use href="#g25" x="352" y="199"/><use href="#g23" x="359" y="199"/><use href="#g27" x="366" y="199"/><use href="#g27" x="373" y="199"/><use href="#g24" x="380" y="199"/><use href="#g26" x="387" y="199"/><use href="#g3" x="401" y="199"/><use href="#g7" x="408" y="199"/><use href="#g15" x="443" y="199"/><use href="#g25" x="450" y="199"/><use href="#g23" x="457" y="199"/><use href="#g27" x="464" y="199"/><use href="#g27" x="471" y="199"/><use href="#g24" x="478" y="199"/><use href="#g26" x="485" y="199"/><use href="#g3" x="499" y="199"/><use href="#g8" x="506" y="199"/><use href="#g15" x="541" y="199"/><use href="#g25" x="548" y="199"/><use href="#g23" x="555" y="199"/><use href="#g27" x="562" y="199"/><use href="#g27" x="569" y="199"/><use href="#g24" x="576" y="199"/><use href="#g26" x="583" y="199"/><use href="#g3" x="597" y="199"/><use href="#g9" x="604" y="199"/><use href="#g15" x="639" y="199"/><use href="#g25" x="646" y="199"/><use href="#g23" x="653" y="199"/><use href="#g27" x="660" y="199"/><use href="#g27" x="667" y="199"/><use href="#g24" x="674" y="199"/><use href="#g26" x="681" y="199"/><use href="#g3" x="695" y="199"/><use href="#g10" x="702" y="199"/><use href="#g15" x="737" y="199"/><use href="#g25" x="744" y="199"/><use href="#g23" x="751" y="199"/><use href="#g27" x="758" y="199"/><use href="#g27" x="765" y="199"/><use href="#g24" x="772" y="199"/><use href="#g26" x="779" y="199"/><use href="#g3" x="793" y="199"/><use href="#g11" x="800" y="199"/></g><g fill="#6adc6a"><use href="#g3" x="16" y="228"/><use href="#g3" x="23" y="228"/><use href="#g3" x="30" y="228"/><use href="#c0" x="51" y="228"/><use href="#c3" x="149" y="228"/><use href="#c3" x="247" y="228"/><use href="#c5" x="345" y="228"/><use href="#c4" x="443" y="228"/><use href="#c12" x="541" y="228"/><use href="#c4" x="639" y="228"/><use href="#c4" x="737" y="228"/><use href="#g3" x="16" y="243"/><use href="#g3" x="23" y="243"/><use href="#g4" x="30" y="243"/><use href="#c1" x="51" y="243"/><use href="#c4" x="149" y="243"/><use href="#c4" x="247" y="243"/><use href="#c6" x="345" y="243"/><use href="#c5" x="443" y="243"/><use href="#c6" x="541" y="243"/><use href="#c4" x="639" y="243"/><use href="#c4" x="737" y="243"/><use href="#g3" x="16" y="258"/><use href="#g3" x="23" y="258"/><use href="#g5" x="30" y="258"/><use href="#c1" x="51" y="258"/><use href="#c4" x="149" y="258"/><use href="#c4" x="247" y="258"/><use href="#c4" x="345" y="258"/><use href="#c6" x="443" y="258"/><use href="#c12" x="541" y="258"/><use href="#c4" x="639" y="258"/><use href="#c4" x="737" y="258"/><use href="#g3" x="16" y="273"/><use href="#g3" x="23" y="273"/><use href="#g6" x="30" y="273"/><use href="#c1" x="51" y="273"/><use href="#c4" x="149" y="273"/><use href="#c4" x="247" y="273"/><use href="#c4" x="345" y="273"/><use href="#c4" x="443" y="273"/><use href="#c6" x="541" y="273"/><use href="#c4" x="639" y="273"/><use href="#c4" x="737" y="273"/><use href="#g3" x="16" y="288"/><use href="#g3" x="23" y="288"/><use href="#g7" x="30" y="288"/><use href="#c2" x="51" y="288"/><use href="#c4" x="149" y="288"/><use href="#c4" x="247" y="288"/><use href="#c7" x="345" y="288"/><use href="#c4" x="443" y="288"/><use href="#c12" x="541" y="288"/><use href="#c4" x="639" y="288"/><use href="#c4" x="737" y="288"/><use href="#g3" x="16" y="303"/><use href="#g3" x="23" y="303"/><use href="#g8" x="30" y="303"/><use href="#c1" x="51" y="303"/><use href="#c4" x="149" y="303"/><use href="#c4" x="247" y="303"/><use href="#c6" x="345" y="303"/><use href="#c7" x="443" y="303"/><use href="#c6" x="541" y="303"/><use href="#c4" x="639" y="303"/><use href="#c4" x="737" y="303"/><use href="#g3" x="16" y="318"/><use href="#g3" x="23" y="318"/><use href="#g9" x="30" y="318"/><use href="#c1" x="51" y="318"/><use href="#c4" x="149" y="318"/><use href="#c4" x="247" y="318"/><use href="#c8" x="345" y="318"/><use href="#c6" x="443" y="318"/><use href="#c12" x="541" y="318"/><use href="#c4" x="639" y="318"/><use href="#c4" x="737" y="318"/><use href="#g3" x="16" y="333"/><use href="#g3" x="23" y="333"/><use href="#g10" x="30" y="333"/><use href="#c1" x="51" y="333"/><use href="#c4" x="149" y="333"/><use href="#c4" x="247" y="333"/><use href="#c6" x="345" y="333"/><use href="#c8" x="443" y="333"/><use href="#c6" x="541" y="333"/><use href="#c4" x="639" y="333"/><use href="#c4" x="737" y="333"/><use href="#g3" x="16" y="348"/><use href="#g3" x="23" y="348"/><use href="#g11" x="30" y="348"/><use href="#c0" x="51" y="348"/><use href="#c3" x="149" y="348"/><use href="#c3" x="247" y="348"/><use href="#c4" x="345" y="348"/><use href="#c6" x="443" y="348"/><use href="#c12" x="541" y="348"/><use href="#c15" x="639" y="348"/><use href="#c15" x="737" y="348"/><use href="#g3" x="16" y="363"/><use href="#g3" x="23" y="363"/><use href="#g12" x="30" y="363"/><use href="#c1" x="51" y="363"/><use href="#c4" x="149" y="363"/><use href="#c4" x="247" y="363"/><use href="#c4" x="345" y="363"/><use href="#c4" x="443" y="363"/><use href="#c6" x="541" y="363"/><use href="#c4" x="639" y="363"/><use href="#c4" x="737" y="363"/><use href="#g3" x="16" y="378"/><use href="#g4" x="23" y="378"/><use href="#g3" x="30" y="378"/><use href="#c1" x="51" y="378"/><use href="#c4" x="149" y="378"/><use href="#c4" x="247" y="378"/><use href="#c9" x="345" y="378"/><use href="#c4" x="443" y="378"/><use href="#c12" x="541" y="378"/><use href="#c4" x="639" y="378"/><use href="#c4" x="737" y="378"/><use href="#g3" x="16" y="393"/><use href="#g4" x="23" y="393"/><use href="#g4" x="30" y="393"/><use href="#c1" x="51" y="393"/><use href="#c4" x="149" y="393"/><use href="#c4" x="247" y="393"/><use href="#c6" x="345" y="393"/><use href="#c9" x="443" y="393"/><use href="#c6" x="541" y="393"/><use href="#c4" x="639" y="393"/><use href="#c4" x="737" y="393"/><use href="#g3" x="16" y="408"/><use href="#g4" x="23" y="408"/><use href="#g5" x="30" y="408"/><use href="#c2" x="51" y="408"/><use href="#c4" x="149" y="408"/><use href="#c4" x="247" y="408"/><use href="#c5" x="345" y="408"/><use href="#c6" x="443" y="408"/><use href="#c12" x="541" y="408"/><use href="#c4" x="639" y="408"/><use href="#c4" x="737" y="408"/><use href="#g3" x="16" y="423"/><use href="#g4" x="23" y="423"/><use href="#g6" x="30" y="423"/><use href="#c1" x="51" y="423"/><use href="#c4" x="149" y="423"/><use href="#c4" x="247" y="423"/><use href="#c6" x="345" y="423"/><use href="#c5" x="443" y="423"/><use href="#c6" x="541" y="423"/><use href="#c4" x="639" y="423"/><use href="#c4" x="737" y="423"/><use href="#g3" x="16" y="438"/><use href="#g4" x="23" y="438"/><use href="#g7" x="30" y="438"/><use href="#c1" x="51" y="438"/><use href="#c4" x="149" y="438"/><use href="#c4" x="247" y="438"/><use href="#c4" x="345" y="438"/><use href="#c6" x="443" y="438"/><use href="#c12" x="541" y="438"/><use href="#c4" x="639" y="438"/><use href="#c4" x="737" y="438"/><use href="#g3" x="16" y="453"/><use href="#g4" x="23" y="453"/><use href="#g8" x="30" y="453"/><use href="#c1" x="51" y="453"/><use href="#c4" x="149" y="453"/><use href="#c4" x="247" y="453"/><use href="#c4" x="345" y="453"/><use href="#c4" x="443" y="453"/><use href="#c6" x="541" y="453"/><use href="#c4" x="639" y="453"/><use href="#c4" x="737" y="453"/><use href="#g3" x="16" y="468"/><use href="#g4" x="23" y="468"/><use href="#g9" x="30" y="468"/><use href="#c0" x="51" y="468"/><use href="#c3" x="149" y="468"/><use href="#c3" x="247" y="468"/><use href="#c8" x="345" y="468"/><use href="#c4" x="443" y="468"/><use href="#c13" x="541" y="468"/><use href="#c4" x="639" y="468"/><use href="#c4" x="737" y="468"/><use href="#g3" x="16" y="483"/><use href="#g4" x="23" y="483"/><use href="#g10" x="30" y="483"/><use href="#c1" x="51" y="483"/><use href="#c4" x="149" y="483"/><use href="#c4" x="247" y="483"/><use href="#c6" x="345" y="483"/><use href="#c8" x="443" y="483"/><use href="#c6" x="541" y="483"/><use href="#c4" x="639" y="483"/><use href="#c4" x="737" y="483"/><use href="#g3" x="16" y="498"/><use href="#g4" x="23" y="498"/><use href="#g11" x="30" y="498"/><use href="#c1" x="51" y="498"/><use href="#c4" x="149" y="498"/><use href="#c4" x="247" y="498"/><use href="#c10" x="345" y="498"/><use href="#c6" x="443" y="498"/><use href="#c13" x="541" y="498"/><use href="#c4" x="639" y="498"/><use href="#c4" x="737" y="498"/><use href="#g3" x="16" y="513"/><use href="#g4" x="23" y="513"/><use href="#g12" x="30" y="513"/><use href="#c1" x="51" y="513"/><use href="#c4" x="149" y="513"/><use href="#c4" x="247" y="513"/><use href="#c6" x="345" y="513"/><use href="#c10" x="443" y="513"/><use href="#c6" x="541" y="513"/><use href="#c4" x="639" y="513"/><use href="#c4" x="737" y="513"/><use href="#g3" x="16" y="528"/><use href="#g5" x="23" y="528"/><use href="#g3" x="30" y="528"/><use href="#c2" x="51" y="528"/><use href="#c4" x="149" y="528"/><use href="#c4" x="247" y="528"/><use href="#c4" x="345" y="528"/><use href="#c6" x="443" y="528"/><use href="#c13" x="541" y="528"/><use href="#c4" x="639" y="528"/><use href="#c4" x="737" y="528"/><use href="#g3" x="16" y="543"/><use href="#g5" x="23" y="543"/><use href="#g4" x="30" y="543"/><use href="#c1" x="51" y="543"/><use href="#c4" x="149" y="543"/><use href="#c4" x="247" y="543"/><use href="#c4" x="345" y="543"/><use href="#c4" x="443" y="543"/><use href="#c6" x="541" y="543"/><use href="#c4" x="639" y="543"/><use href="#c4" x="737" y="543"/><use href="#g3" x="16" y="558"/><use href="#g5" x="23" y="558"/><use href="#g5" x="30" y="558"/><use href="#c1" x="51" y="558"/><use href="#c4" x="149" y="558"/><use href="#c4" x="247" y="558"/><use href="#c9" x="345" y="558"/><use href="#c4" x="443" y="558"/><use href="#c13" x="541" y="558"/><use href="#c4" x="639" y="558"/><use href="#c4" x="737" y="558"/><use href="#g3" x="16" y="573"/><use href="#g5" x="23" y="573"/><use href="#g6" x="30" y="573"/><use href="#c1" x="51" y="573"/><use href="#c4" x="149" y="573"/><use href="#c4" x="247" y="573"/><use href="#c6" x="345" y="573"/><use href="#c9" x="443" y="573"/><use href="#c6" x="541" y="573"/><use href="#c4" x="639" y="573"/><use href="#c4" x="737" y="573"/><use href="#g3" x="16" y="588"/><use href="#g5" x="23" y="588"/><use href="#g7" x="30" y="588"/><use href="#c0" x="51" y="588"/><use href="#c3" x="149" y="588"/><use href="#c3" x="247" y="588"/><use href="#c11" x="345" y="588"/><use href="#c6" x="443" y="588"/><use href="#c13" x="541" y="588"/><use href="#c15" x="639" y="588"/><use href="#c15" x="737" y="588"/><use href="#g3" x="16" y="603"/><use href="#g5" x="23" y="603"/><use href="#g8" x="30" y="603"/><use href="#c1" x="51" y="603"/><use href="#c4" x="149" y="603"/><use href="#c4" x="247" y="603"/><use href="#c6" x="345" y="603"/><use href="#c11" x="443" y="603"/><use href="#c6" x="541" y="603"/><use href="#c4" x="639" y="603"/><use href="#c4" x="737" y="603"/><use href="#g3" x="16" y="618"/><use href="#g5" x="23" y="618"/><use href="#g9" x="30" y="618"/><use href="#c1" x="51" y="618"/><use href="#c4" x="149" y="618"/><use href="#c4" x="247" y="618"/><use href="#c4" x="345" y="618"/><use href="#c6" x="443" y="618"/><use href="#c13" x="541" y="618"/><use href="#c4" x="639" y="618"/><use href="#c4" x="737" y="618"/><use href="#g3" x="16" y="633"/><use href="#g5" x="23" y="633"/><use href="#g10" x="30" y="633"/><use href="#c1" x="51" y="633"/><use href="#c4" x="149" y="633"/><use href="#c4" x="247" y="633"/><use href="#c4" x="345" y="633"/><use href="#c4" x="443" y="633"/><use href="#c6" x="541" y="633"/><use href="#c4" x="639" y="633"/><use href="#c4" x="737" y="633"/><use href="#g3" x="16" y="648"/><use href="#g5" x="23" y="648"/><use href="#g11" x="30" y="648"/><use href="#c2" x="51" y="648"/><use href="#c4" x="149" y="648"/><use href="#c4" x="247" y="648"/><use href="#c8" x="345" y="648"/><use href="#c4" x="443" y="648"/><use href="#c14" x="541" y="648"/><use href="#c4" x="639" y="648"/><use href="#c4" x="737" y="648"/><use href="#g3" x="16" y="663"/><use href="#g5" x="23" y="663"/><use href="#g12" x="30" y="663"/><use href="#c1" x="51" y="663"/><use href="#c4" x="149" y="663"/><use href="#c4" x="247" y="663"/><use href="#c4" x="345" y="663"/><use href="#c8" x="443" y="663"/><use href="#c6" x="541" y="663"/><use href="#c4" x="639" y="663"/><use href="#c4" x="737" y="663"/></g></svg>
<div style="left:918px;top:194px;width:16px;height:484px;background:#a8a5a8"></div>
<div style="left:918px;top:194px;width:2px;height:484px;background:#848284"></div>
<div style="left:918px;top:194px;width:16px;height:2px;background:#848284"></div>
<div style="left:932px;top:194px;width:3px;height:500px;background:#fff"></div>
<svg style="position:absolute;left:919px;top:195px" width="14" height="13" viewBox="0 0 14 13"><path d="M7 1.5 L12.5 11.5 H1.5 Z" fill="#b8b5b8"/><path d="M1.5 11.5 L7 1.5" stroke="#fff" stroke-width="1.3"/><path d="M7 1.5 L12.5 11.5 H1.5" stroke="#808080" stroke-width="1.2" fill="none"/></svg>
<div style="left:920px;top:208px;width:12px;height:212px;background:#c6c3c6;border-top:2px solid #fff;border-left:2px solid #fff;border-right:2px solid #848284;border-bottom:2px solid #848284;box-sizing:border-box"></div>
<svg style="position:absolute;left:919px;top:663px" width="14" height="14" viewBox="0 0 14 14"><path d="M1.5 1.5 H12.5 L7 12.5 Z" fill="#b8b5b8"/><path d="M1.5 1.5 H12.5 M1.5 1.5 L7 12.5" stroke="#fff" stroke-width="1.3"/><path d="M12.5 1.5 L7 12.5" stroke="#808080" stroke-width="1.2"/></svg>
<div style="left:9px;top:678px;width:909px;height:14px;background:#a8a5a8"></div>
<div style="left:9px;top:678px;width:909px;height:2px;background:#848284"></div>
<svg style="position:absolute;left:9px;top:679px" width="14" height="14" viewBox="0 0 14 14"><path d="M1.5 7 L12.5 1.5 V12.5 Z" fill="#b8b5b8"/><path d="M1.5 7 L12.5 1.5" stroke="#fff" stroke-width="1.3"/><path d="M1.5 7 L12.5 12.5 V1.5" stroke="#808080" stroke-width="1.2" fill="none"/></svg>
<div style="left:23px;top:680px;width:110px;height:12px;background:#c6c3c6;border-top:2px solid #fff;border-left:2px solid #fff;border-right:2px solid #848284;border-bottom:2px solid #848284;box-sizing:border-box"></div>
<svg style="position:absolute;left:903px;top:679px" width="14" height="14" viewBox="0 0 14 14"><path d="M1.5 1.5 L12.5 7 L1.5 12.5 Z" fill="#b8b5b8"/><path d="M1.5 1.5 L12.5 7 M1.5 1.5 V12.5" stroke="#fff" stroke-width="1.3"/><path d="M1.5 12.5 L12.5 7" stroke="#808080" stroke-width="1.2"/></svg>
<div style="left:918px;top:678px;width:16px;height:15px;background:#c6c3c6"></div>
<div style="left:6px;top:692px;width:929px;height:3px;background:#fff"></div>
<div style="left:6px;top:695px;width:931px;height:2px;background:#848284"></div>
<div style="left:935px;top:138px;width:2px;height:559px;background:#848284"></div>
<div style="left:5px;top:697px;width:932px;height:3px;background:#c6c3c6"></div>
<div style="left:5px;top:700px;width:932px;height:1px;background:#fff"></div>
<svg style="position:absolute;left:924px;top:709px" width="14" height="14" viewBox="0 0 14 14"><path d="M1 13.5 L13.5 1 M5 13.5 L13.5 5 M9 13.5 L13.5 9" stroke="#fff" stroke-width="1"/><path d="M2.5 13.5 L13.5 2.5 M6.5 13.5 L13.5 6.5 M10.5 13.5 L13.5 10.5" stroke="#848284" stroke-width="1.2"/></svg></body></html>
